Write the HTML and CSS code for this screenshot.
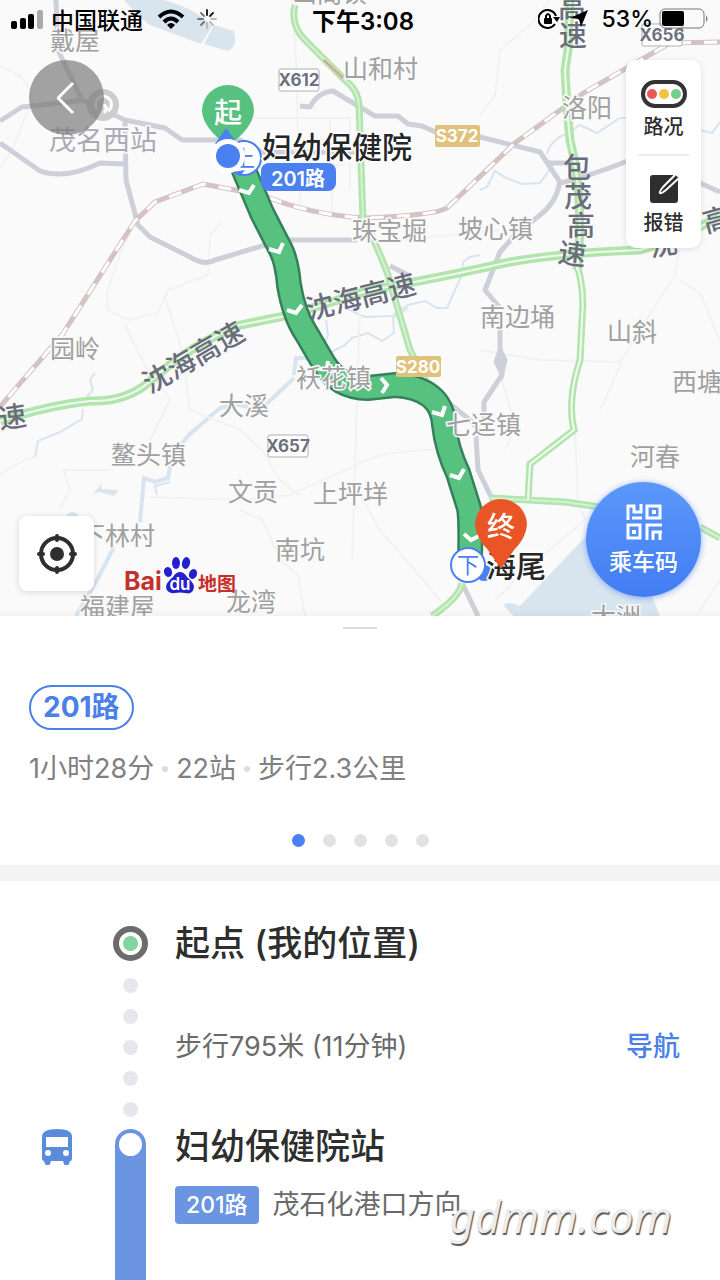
FILE: index.html
```html
<!DOCTYPE html>
<html lang="zh-CN">
<head>
  <meta charset="UTF-8" />
  <meta name="viewport" content="width=device-width, initial-scale=1.0" />
  <title>201路</title>
  <link rel="stylesheet" href="styles.css">
</head>
<body>
  <section class="map">
    <svg class="map-canvas" viewBox="0 0 720 616">
      <!-- Water -->
      <g class="water">
        <path d="M124 0 H163 Q195 8 212 26 L201 44 L150 25 Q137 15 124 0 Z" />
        <path d="M214 25 L234 31 Q238 46 228 51 L204 44 Z" />
        <path d="M587 535 L520 606 Q505 600 504 606 L513 616 H660 L652 596 Z" />
        <path d="M93 494 L102 483 L101 489 L119 490 L114 496 L100 492 Z" />
        <path d="M66 516 Q72 508 79 516 Z" />
      </g>
      <g class="river">
        <path d="M95 373 L90 380 L93 390 L87 396 M83 409 L82 419 L60 432 L38 441 L35 457" />
        <path d="M547 154 Q550 140 568 133 L580 125 L597 133 L620 118 L700 118 M700 130 L712 133 L720 122" />
        <path d="M480 190 L487 187 L495 171 L506 178 L522 184 L540 183 L553 165" />
        <path d="M480 255 L470 257 L463 262 L462 275 L455 290 L447 308 L437 308 L425 301 L408 305 L392 316 L365 317 L345 308 M326 320 L328 335 L322 350" />
        <path d="M157 495 L155 486 L170 482" />
        <path d="M408 308 L393 318 L394 333 L382 341 L368 333 L352 338 L345 345 L320 358" />
      </g>
      <g class="river river-wide">
        <path d="M320 358 L296 358 L294 375 M294 378 L275 396 L260 410 L235 404 L220 408 L190 434 L172 455 L168 478 L155 482 L144 478 L140 522" />
        <path d="M114 547 L97 580 L76 616" />
      </g>

      <!-- Minor roads -->
      <g class="lane">
        <path d="M0 66 Q30 76 32 100 L24 120 L12 150 L0 168" />
        <path d="M135 220 L118 260 L107 292 L108 310 L128 320 L158 313 L168 290 L208 275 L210 235 L222 222" />
        <path d="M125 325 L145 365 L170 400 L150 440 M166 300 L182 350 L190 410 L240 430 M110 470 L64 470 L70 490 L60 510" />
        <path d="M292 0 L296 60 L300 205 M240 118 L350 118 V190 M300 140 H350 M300 165 H345 M330 120 L332 215 M360 300 L357 400 L352 560" />
        <path d="M480 350 L540 360 L620 362 L675 275 L679 250 M679 280 L700 293 L720 340 M600 410 L622 362 M502 380 L515 425 L505 450" />
        <path d="M0 475 Q30 455 35 458 M150 497 L240 500 L290 495 L352 467 Q380 450 435 450 M360 495 L380 530 L442 602 M240 510 L262 520 L280 560 L298 575 L305 616" />
        <path d="M550 0 L530 25 L500 50 L495 95 L480 115 M575 430 L578 500 L585 520 L520 575 L495 600 M720 580 L700 610" />
        <path d="M240 430 L262 450 L280 480 L300 496 M400 240 L450 235 L500 230" />
      </g>

      <!-- Main roads -->
      <g class="road">
        <path d="M56 0 L58 50 L82 100 L68 102 L22 107 L0 121" />
        <path d="M0 143 L40 171 Q65 180 100 163 L124 164" />
        <path d="M82 100 L125 120 L165 128 L182 140 L240 140 L262 152 L370 152" />
        <path d="M125 120 L126 180 L138 225 L150 237 L190 257 Q205 266 215 260 L265 245 L290 240 L357 240" />
        <path d="M300 106 L310 107 Q318 92 333 91 L375 116 L398 116 L408 124 L422 126 L440 134 L480 137 L540 152 L560 182 Q556 203 540 215 L515 235 L500 252 L485 290 L500 308 L500 350 L502 375 L484 402 V420" />
        <path d="M548 163 L575 163 M560 183 Q590 176 625 162 L660 155 M700 183 L720 192" />
        <path d="M390 266 L410 276 M476 436 L478 470 L495 505 M463 585 L478 616" />
        <path d="M440 396 L470 420 L480 432" />
      </g>
      <path class="road-bulge" d="M500 348 L506 360 L502 376 L495 362 Z" />

      <!-- Railway -->
      <g class="rail">
        <path class="rail-edge" d="M0 407 L10 395 L62 335 L135 221 L155 202 L203 184 L262 195 Q310 215 365 218 Q440 215 448 207 L515 143 L585 92 L670 43 L720 42" />
        <path class="rail-gap" d="M0 407 L10 395 L62 335 L135 221 L155 202 L203 184 L262 195 Q310 215 365 218 Q440 215 448 207 L515 143 L585 92 L670 43 L720 42" />
        <path class="rail-tie" d="M0 407 L10 395 L62 335 L135 221 L155 202 L203 184 L262 195 Q310 215 365 218 Q440 215 448 207 L515 143 L585 92 L670 43 L720 42" />
      </g>

      <!-- Expressways -->
      <g class="highway">
        <path d="M0 421 Q50 405 90 401 Q125 402 148 383 Q190 345 240 325 L290 315 L370 290 Q430 280 510 262 Q560 253 640 250 Q690 235 720 215" />
        <path d="M570 0 L568 50 L565 70 Q567 110 570 140 Q585 200 577 270" />
        <path class="thin" d="M295 5 Q290 25 305 40 L345 80 Q358 90 359 105 L363 220 Q375 240 388 275 L410 350 L428 385" />
        <path class="thin" d="M577 265 Q585 290 582 320 L580 360 Q567 400 574 430 L530 464 L528 500" />
        <path class="thin" d="M490 498 L528 500 L565 502 L600 507 M700 527 L720 538 M462 583 Q460 597 432 616" />
      </g>
      <g class="highway-line">
        <path d="M0 421 Q50 405 90 401 Q125 402 148 383 Q190 345 240 325 L290 315 L370 290 Q430 280 510 262 Q560 253 640 250 Q690 235 720 215" />
        <path d="M570 0 L568 50 L565 70 Q567 110 570 140 Q585 200 577 270" />
        <path class="fine" d="M295 5 Q290 25 305 40 L345 80 Q358 90 359 105 L363 220 Q375 240 388 275 L410 350 L428 385" />
        <path d="M577 265 Q585 290 582 320 L580 360 Q567 400 574 430 L530 464 L528 500" />
        <path class="fine" d="M490 498 L528 500 L565 502 L600 507 M700 527 L720 538 M462 583 Q460 597 432 616" />
      </g>
      <path class="jam" d="M324 60 L343 78" />

      <!-- Railway station badge -->
      <circle cx="103" cy="105" r="16" fill="#cdcdcd" />
      <path d="M97 109 A8 8 0 1 1 108 111 M103 105 Q109 106 104 113" fill="none" stroke="#fff" stroke-width="3" />

      <!-- Bus route -->
      <path class="route-edge" d="M243 168 L262 213 L281 250 Q287 262 289 285 Q294 315 306 333 L323 362 Q338 388 368 388 L395 385 Q442 388 444 425 Q447 450 458 473 L469 508 Q471 520 470 560" />
      <path class="route" d="M243 168 L262 213 L281 250 Q287 262 289 285 Q294 315 306 333 L323 362 Q338 388 368 388 L395 385 Q442 388 444 425 Q447 450 458 473 L469 508 Q471 520 470 560" />
      <g class="chevrons">
        <path d="M239 190 L249 193 L254 185" />
        <path d="M269 249 L279 252 L283 243" />
        <path d="M287 310 L296 313 L302 305" />
        <path d="M318 369 L327 369 L328 361" />
        <path d="M381 378 L387 385 L382 393" />
        <path d="M432 412 L442 415 L445 406" />
        <path d="M450 475 L459 478 L464 469" />
        <path d="M464 534 L471 540 L479 536" />
      </g>

      <!-- Road numbers -->
      <g class="sign">
        <rect x="279" y="69" width="40" height="22" rx="2" /><text x="299" y="86">X612</text>
        <rect x="642" y="24" width="40" height="22" rx="2" /><text x="662" y="41">X656</text>
        <rect x="268" y="435" width="40" height="22" rx="2" /><text x="288" y="452">X657</text>
      </g>
      <g class="sign sign-state">
        <rect x="435" y="125" width="45" height="22" rx="2" /><text x="457" y="142">S372</text>
        <rect x="396" y="356" width="45" height="21" rx="2" /><text x="418" y="373">S280</text>
      </g>

      <!-- Place names -->
      <g class="place">
        <text x="50" y="50">戴屋</text>
        <text x="292" y="2">山阁镇</text>
        <text x="49" y="150" class="place-station">茂名西站</text>
        <text x="343" y="78">山和村</text>
        <text x="562" y="117">洛阳</text>
        <text x="352" y="240">珠宝堀</text>
        <text x="458" y="238">坡心镇</text>
        <text x="50" y="358">园岭</text>
        <text x="219" y="415">大溪</text>
        <text x="296" y="387">袄花镇</text>
        <text x="480" y="326">南边埇</text>
        <text x="607" y="341">山斜</text>
        <text x="672" y="391">西塘</text>
        <text x="446" y="434">七迳镇</text>
        <text x="111" y="464">鳌头镇</text>
        <text x="630" y="466">河春</text>
        <text x="228" y="501">文贡</text>
        <text x="313" y="503">上坪垟</text>
        <text x="80" y="545">下林村</text>
        <text x="275" y="559">南坑</text>
        <text x="80" y="616">福建屋</text>
        <text x="226" y="611">龙湾</text>
        <text x="591" y="626">大洲</text>
      </g>
      <g class="expressway-name">
        <text x="150" y="394" transform="rotate(-30 150 394)">沈海高速</text>
        <text x="309" y="320" transform="rotate(-14 309 320)">沈海高速</text>
        <text x="0" y="429" transform="rotate(-8 0 429)">速</text>
        <text x="651" y="257" transform="rotate(-10 651 257)">沈</text>
        <text x="706" y="233" transform="rotate(-15 706 233)">高</text>
        <text x="558" y="18">高</text>
        <text x="559" y="46">速</text>
        <text x="563" y="178">包</text>
        <text x="564" y="207">茂</text>
        <text x="567" y="236">高</text>
        <text x="557" y="262" transform="rotate(8 557 262)">速</text>
      </g>

      <!-- Start of the ride -->
      <path d="M228 85 A26 26 0 0 1 254 111 Q253 128 228 146 Q203 128 202 111 A26 26 0 0 1 228 85 Z" fill="#57c180" />
      <text x="228" y="123" class="pin-text">起</text>
      <circle cx="244" cy="158" r="17" class="stop" />
      <text x="244" y="166" class="stop-text">上</text>
      <path d="M226 128 L238 144 H215 Z M245 170 L240 176 L233 172 Z" fill="#4a80f0" />
      <circle cx="228" cy="156" r="17" fill="#fff" />
      <circle cx="228" cy="156" r="12" fill="#4a80f0" />
      <text x="262" y="158" class="stop-name">妇幼保健院</text>
      <rect x="261" y="163" width="75" height="28" rx="8" fill="#4a80f0" />
      <text x="298" y="186" class="route-tag">201路</text>

      <!-- End of the ride -->
      <circle cx="484" cy="573" r="8" fill="#4a80f0" />
      <text x="486" y="577" class="stop-name">海尾</text>
      <circle cx="468" cy="565" r="17" class="stop" />
      <text x="468" y="573" class="stop-text">下</text>
      <path d="M501 499 A26 26 0 0 1 527 525 Q526 538 514 550 L501 569 L488 550 Q476 538 475 525 A26 26 0 0 1 501 499 Z" fill="#e95527" />
      <text x="501" y="537" class="pin-text">终</text>
    </svg>

    <header class="status-bar">
      <div class="status-left">
        <svg width="32" height="20" viewBox="0 0 32 20">
          <rect x="0" y="12" width="6" height="8" rx="2" />
          <rect x="9" y="9" width="6" height="11" rx="2" />
          <rect x="17" y="5" width="6" height="15" rx="2" />
          <rect x="26" y="1" width="6" height="19" rx="2" fill="#aaa" />
        </svg>
        <span>中国联通</span>
        <svg class="wifi" width="28" height="20" viewBox="0 0 28 20">
          <path d="M2 8 Q14 -3 26 8 M7 13 Q14 6 21 13" fill="none" stroke="#000" stroke-width="4" />
          <path d="M10 16 Q14 12 18 16 L14 20 Z" />
        </svg>
        <svg class="spinner" width="20" height="20" viewBox="0 0 20 20">
          <g fill="none" stroke-width="2" stroke-linecap="round">
            <path stroke="#222" d="M10 1 V6 M16 4 L13 7" />
            <path stroke="#777" d="M1 10 H6 M4 4 L7 7 M4 16 L7 13" />
            <path stroke="#bbb" d="M19 10 H14 M16 16 L13 13 M10 19 V14" />
          </g>
        </svg>
      </div>
      <span class="clock">下午3:08</span>
      <div class="status-right">
        <svg width="22" height="20" viewBox="0 0 22 20">
          <path d="M17 15 A9 9 0 1 1 18 7" fill="none" stroke="#000" stroke-width="2" />
          <path d="M15 8 H22 L19 13 Z" />
          <rect x="6" y="9" width="8" height="6" rx="1" />
          <path d="M8 9 V7 Q10 3 12 7 V9" fill="none" stroke="#000" stroke-width="2" />
        </svg>
        <svg class="arrow" width="18" height="18" viewBox="0 0 18 18">
          <path d="M18 0 L11 17 L9 9 L0 8 Z" />
        </svg>
        <span>53%</span>
        <svg width="50" height="22" viewBox="0 0 50 22">
          <rect x="1" y="1" width="44" height="19" rx="5" fill="none" stroke="#777" />
          <rect x="3" y="3" width="22" height="15" rx="2" />
          <path d="M47 7 Q50 11 47 14 Z" fill="#777" />
        </svg>
      </div>
    </header>

    <button class="back" aria-label="返回">
      <svg width="20" height="34" viewBox="0 0 20 34">
        <path d="M16 2 L1 17 L16 32" fill="none" stroke="#fff" stroke-width="3" />
      </svg>
    </button>

    <div class="tools">
      <button class="tool">
        <svg width="46" height="28" viewBox="0 0 46 28">
          <rect x="2" y="2" width="42" height="24" rx="12" fill="#fff" stroke="#333" stroke-width="4" />
          <circle cx="11" cy="14" r="5" fill="#ea5a55" />
          <circle cx="23" cy="14" r="5" fill="#f5c344" />
          <circle cx="35" cy="14" r="5" fill="#6fd08c" />
        </svg>
        <span>路况</span>
      </button>
      <button class="tool">
        <svg width="30" height="30" viewBox="0 0 30 30">
          <path d="M4 1 H24 L29 6 V26 Q29 29 26 29 H4 Q1 29 1 26 V4 Q1 1 4 1 Z" fill="#2e2e2e" />
          <path d="M26 1 L14 13 Q10 18 11 19 Q12 20 17 16 L30 4" fill="#2e2e2e" stroke="#fff" stroke-width="2" />
        </svg>
        <span>报错</span>
      </button>
    </div>

    <button class="locate" aria-label="定位">
      <svg width="40" height="40" viewBox="0 0 40 40">
        <circle cx="20" cy="20" r="16" fill="none" stroke="#2e2e2e" stroke-width="4" />
        <circle cx="20" cy="20" r="7" fill="#2e2e2e" />
        <path d="M20 2 V6 M20 34 V38 M2 20 H6 M34 20 H38" stroke="#2e2e2e" stroke-width="4" stroke-linecap="round" />
      </svg>
    </button>

    <svg class="baidu" width="114" height="40" viewBox="0 0 114 40">
      <text x="0" y="35" class="baidu-name">Bai</text>
      <g fill="#2320d0">
        <ellipse cx="44" cy="17" rx="4" ry="5" transform="rotate(-15 44 17)" />
        <ellipse cx="52" cy="8" rx="4" ry="6" />
        <ellipse cx="62" cy="8" rx="4" ry="6" transform="rotate(12 62 8)" />
        <ellipse cx="69" cy="19" rx="4" ry="5" transform="rotate(20 69 19)" />
        <path d="M56 17 Q60 17 63 22 Q70 28 70 32 Q69 40 61 38 Q56 37 51 38 Q43 39 42 32 Q42 28 49 22 Q52 17 56 17 Z" />
      </g>
      <text x="56" y="35" class="baidu-du">du</text>
      <text x="74" y="36" class="baidu-map">地图</text>
    </svg>

    <button class="ride-code">
      <svg width="36" height="36" viewBox="0 0 36 36">
        <g fill="none" stroke="#fff" stroke-width="3">
          <path d="M2 16 V2 H8 V8 H15 V0 M6 14 H16" />
          <rect x="21" y="2" width="13" height="12" />
          <rect x="2" y="21" width="12" height="13" />
          <path d="M21 36 V21 H36 M27 36 V28 H36 M34 28 V36" />
        </g>
        <path d="M26 6 H30 V10 H26 Z M6 26 H10 V30 H6 Z" fill="#fff" />
      </svg>
      <span>乘车码</span>
    </button>
  </section>

  <section class="summary">
    <div class="handle"></div>
    <h1 class="line-name">201路</h1>
    <p class="facts">
      <span>1小时28分</span>
      <span>22站</span>
      <span>步行2.3公里</span>
    </p>
    <div class="pager">
      <button class="page active" aria-label="1"></button>
      <button class="page" aria-label="2"></button>
      <button class="page" aria-label="3"></button>
      <button class="page" aria-label="4"></button>
      <button class="page" aria-label="5"></button>
    </div>
  </section>

  <ol class="steps">
    <li class="step">
      <div class="track"><span class="origin"></span></div>
      <h2>起点 (我的位置)</h2>
    </li>
    <li class="step walk">
      <div class="track dots">
        <i></i><i></i><i></i><i></i><i></i>
      </div>
      <p>步行795米 (11分钟)</p>
      <a class="navigate" href="#">导航</a>
    </li>
    <li class="step ride">
      <svg class="bus" width="30" height="36" viewBox="0 0 30 36">
        <path d="M0 7 Q1 0 15 0 Q29 0 30 7 V30 Q30 32 28 32 L27 35 Q24 38 22 35 L21 32 H9 L8 35 Q6 38 3 35 L2 32 Q0 32 0 30 Z" fill="#5b8cdc" />
        <rect x="4" y="8" width="22" height="10" fill="#fff" />
        <circle cx="6" cy="24" r="3" fill="#fff" />
        <circle cx="24" cy="24" r="3" fill="#fff" />
      </svg>
      <div class="track line"></div>
      <div class="stop-info">
        <h2>妇幼保健院站</h2>
        <p class="direction"><span class="line-tag">201路</span>茂石化港口方向</p>
      </div>
    </li>
  </ol>

  <div class="watermark">gdmm.com</div>
</body>
</html>
```

FILE: styles.css
```css
/* Global Styles */
* {
  box-sizing: border-box;
}

body {
  margin: 0;
  height: 100vh;
  display: flex;
  flex-direction: column;
  position: relative;
  overflow: hidden;
  background: #fff;
  color: #333;
  font-family: Inter, 'Noto Sans CJK SC', sans-serif;
}

h1, h2, p, ol {
  margin: 0;
  padding: 0;
}

button {
  border: none;
  padding: 0;
  font-family: inherit;
  cursor: pointer;
}

/* Map */
.map {
  position: relative;
  flex: none;
  background: #fafafa;
}

.map-canvas {
  display: block;
  width: 100%;
  height: auto;
}

.map::after {
  content: "";
  position: absolute;
  left: 0;
  right: 0;
  bottom: 0;
  height: 8px;
  background: linear-gradient(rgba(0, 0, 0, 0), rgba(0, 0, 0, 0.03));
}

.water {
  fill: #d8e5ef;
}

.river {
  fill: none;
  stroke: #d8e4f0;
  stroke-width: 2;
}

.river-wide {
  stroke-width: 4;
}

.lane {
  fill: none;
  stroke: #f2f2f3;
  stroke-width: 2;
}

.road {
  fill: none;
  stroke: #cdd0d8;
  stroke-width: 5;
  stroke-linejoin: round;
}

.road-bulge {
  fill: #cdd0d8;
  stroke: #cdd0d8;
  stroke-width: 3;
}

.rail {
  fill: none;
}

.rail-edge {
  stroke: #d5c2c2;
  stroke-width: 5;
}

.rail-gap {
  stroke: #fff;
  stroke-width: 3;
}

.rail-tie {
  stroke: #d5c2c2;
  stroke-width: 4;
  stroke-dasharray: 13 13;
}

.highway {
  fill: none;
  stroke: #b2e5ae;
  stroke-width: 9;
}

.highway .thin {
  stroke-width: 7;
}

.highway-line {
  fill: none;
  stroke: #f2fbf0;
  stroke-width: 2;
}

.highway-line .fine {
  stroke: #d6f0d2;
}

.jam {
  stroke: #e29a90;
  stroke-width: 2;
}

.route-edge {
  fill: none;
  stroke: #35805a;
  stroke-width: 26;
}

.route {
  fill: none;
  stroke: #57c180;
  stroke-width: 21;
}

.chevrons {
  fill: none;
  stroke: #fff;
  stroke-width: 4;
}

.sign rect {
  fill: #fff;
  stroke: #b0b0b4;
  stroke-width: 1;
}

.sign text {
  fill: #6d7180;
  font-size: 17px;
  font-weight: 700;
  text-anchor: middle;
}

.sign-state rect {
  fill: #dfc27c;
  stroke: none;
}

.sign-state text {
  fill: #fff;
}

.place {
  fill: #a0a0a0;
  font-size: 25px;
  stroke: #fafafa;
  stroke-width: 3;
  paint-order: stroke;
}

.place-station {
  font-size: 27px;
  fill: #aaaab4;
}

.expressway-name {
  fill: #6a6c7c;
  font-size: 28px;
  font-weight: 500;
}

.stop-name {
  fill: #262626;
  font-size: 30px;
  font-weight: 500;
  stroke: #fff;
  stroke-width: 3;
  paint-order: stroke;
}

.pin-text {
  fill: #fff;
  font-size: 28px;
  font-weight: 500;
  text-anchor: middle;
}

.stop {
  fill: #fff;
  stroke: #4a80f0;
  stroke-width: 2;
}

.stop-text {
  fill: #4a80f0;
  font-size: 22px;
  text-anchor: middle;
}

.route-tag {
  fill: #fff;
  font-size: 20px;
  font-weight: 600;
  text-anchor: middle;
}

/* Status bar */
.status-bar {
  position: absolute;
  top: 0;
  left: 0;
  right: 0;
  height: 38px;
  padding: 0 11px;
  display: grid;
  grid-template-columns: 1fr auto 1fr;
  align-items: center;
  color: #000;
  font-size: 23px;
  font-weight: 500;
}

.status-left,
.status-right {
  display: flex;
  align-items: center;
  gap: 8px;
}

.status-right {
  justify-content: flex-end;
  gap: 6px;
}

.wifi {
  margin-left: 6px;
}

.spinner {
  margin-left: 4px;
}

.arrow {
  margin: 0 8px 0 4px;
}

.clock {
  padding-left: 6px;
  font-size: 24px;
  font-weight: 600;
}

/* Buttons over the map */
.back,
.locate,
.ride-code,
.tools,
.baidu {
  position: absolute;
}

.back {
  top: 60px;
  left: 29px;
  width: 75px;
  height: 75px;
  border-radius: 50%;
  background: rgba(120, 120, 120, 0.68);
  display: flex;
  align-items: center;
  justify-content: center;
}

.tools {
  top: 60px;
  right: 19px;
  width: 75px;
  padding: 0 12px;
  border-radius: 10px;
  background: #fff;
  box-shadow: 0 1px 6px rgba(0, 0, 0, 0.12);
}

.tool {
  width: 100%;
  height: 94px;
  padding-top: 7px;
  background: none;
  color: #2e2e2e;
  font-size: 20px;
  font-weight: 500;
  line-height: 28px;
  display: flex;
  flex-direction: column;
  align-items: center;
  justify-content: center;
  gap: 5px;
}

.tool svg {
  flex: none;
}

.tool + .tool {
  border-top: 2px solid #ececec;
}

.locate {
  left: 19px;
  bottom: 25px;
  width: 75px;
  height: 75px;
  border-radius: 8px;
  background: #fff;
  box-shadow: 0 1px 6px rgba(0, 0, 0, 0.15);
  display: flex;
  align-items: center;
  justify-content: center;
}

.baidu {
  left: 124px;
  bottom: 21px;
}

.baidu-name {
  fill: #c5302b;
  font-size: 25px;
  font-weight: 700;
}

.baidu-du {
  fill: #fff;
  font-size: 17px;
  font-weight: 600;
  text-anchor: middle;
}

.baidu-map {
  fill: #c5302b;
  font-size: 19px;
  font-weight: 700;
}

.ride-code {
  right: 19px;
  bottom: 19px;
  width: 115px;
  height: 115px;
  padding-top: 2px;
  border-radius: 50%;
  background: linear-gradient(#5b98fa, #437df4);
  box-shadow: 0 1px 6px rgba(67, 125, 244, 0.6);
  color: #fff;
  font-size: 23px;
  font-weight: 500;
  line-height: 32px;
  display: flex;
  flex-direction: column;
  align-items: center;
  justify-content: center;
  gap: 6px;
}

/* Route summary */
.summary {
  flex: none;
  padding: 11px 29px 18px;
  border-bottom: 16px solid #f4f4f4;
}

.handle {
  width: 34px;
  height: 2px;
  margin: 0 auto 56px;
  background: #dcdcdc;
}

.line-name {
  width: fit-content;
  height: 45px;
  padding: 0 12px;
  border: 2px solid #4a80e8;
  border-radius: 23px;
  color: #4a80e8;
  font-size: 28px;
  font-weight: 700;
  line-height: 41px;
}

.facts {
  margin-top: 19px;
  display: flex;
  align-items: center;
  color: #808080;
  font-size: 27px;
  line-height: 40px;
}

.facts span + span::before {
  content: "";
  display: inline-block;
  width: 6px;
  height: 6px;
  margin: 0 8px 4px;
  border-radius: 50%;
  background: #dcdcdc;
  vertical-align: middle;
}

.pager {
  margin-top: 45px;
  display: flex;
  justify-content: center;
  gap: 18px;
}

.page {
  width: 13px;
  height: 13px;
  border-radius: 50%;
  background: #e2e2e2;
}

.page.active {
  background: #4a80f0;
}

/* Steps */
.steps {
  flex: 1;
  padding-top: 40px;
  display: flex;
  flex-direction: column;
  list-style: none;
}

.step {
  display: grid;
  grid-template-columns: 100px 61px 1fr auto;
  align-items: center;
  min-height: 44px;
}

.step h2 {
  color: #2e2e2e;
  font-size: 35px;
  font-weight: 500;
  line-height: 44px;
}

.step p {
  color: #6a6a6a;
  font-size: 27px;
  line-height: 38px;
}

.step > h2,
.step > p,
.stop-info {
  grid-column: 3;
  padding-left: 14px;
}

.track {
  grid-column: 2;
  justify-self: center;
}

.origin {
  display: block;
  width: 35px;
  height: 35px;
  border: 6px solid #6c6c6c;
  border-radius: 50%;
  background: radial-gradient(circle, #82d5a0 7px, #fff 8px);
}

.walk {
  min-height: 164px;
}

.dots {
  display: flex;
  flex-direction: column;
  gap: 16px;
}

.dots i {
  width: 15px;
  height: 15px;
  border-radius: 50%;
  background: #e6e6ec;
}

.navigate {
  margin-right: 40px;
  color: #4a80e8;
  font-size: 27px;
  font-weight: 500;
  line-height: 38px;
  text-decoration: none;
}

.ride {
  flex: 1;
  align-items: start;
}

.bus {
  justify-self: end;
  margin-right: 28px;
}

.line {
  width: 31px;
  height: 100%;
  padding: 4px;
  border-radius: 16px 16px 0 0;
  background: #6b95e0;
}

.line::before {
  content: "";
  display: block;
  width: 23px;
  height: 23px;
  border-radius: 50%;
  background: #fff;
}

.stop-info h2 {
  line-height: 34px;
}

.direction {
  margin-top: 23px;
  display: flex;
  align-items: center;
  gap: 14px;
}

.line-tag {
  padding: 0 11px;
  border-radius: 4px;
  background: #6b95e0;
  color: #fff;
  font-size: 23px;
  font-weight: 500;
}

/* Watermark */
.watermark {
  position: absolute;
  right: 48px;
  bottom: 34px;
  color: #ececec;
  font-family: 'Noto Sans', sans-serif;
  font-size: 44px;
  font-style: italic;
  line-height: 60px;
  text-shadow: 1px 2px 1px #555;
}
```
